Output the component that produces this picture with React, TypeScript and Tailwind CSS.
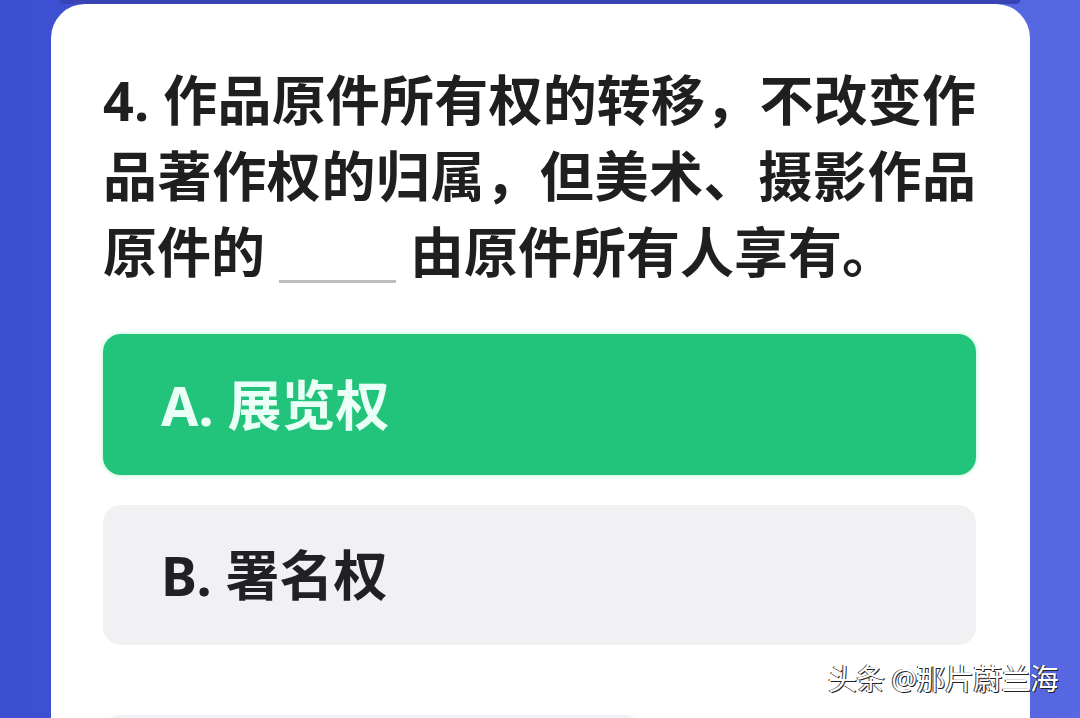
import React from "react";

const CJK = "font-['Noto_Sans','Noto_Sans_CJK_SC',sans-serif]";

function Option({ label, text, active }: { label: string; text: string; active?: boolean }) {
  return (
    <div
      className={
        active
          ? "h-[141px] rounded-[18px] bg-[#21c47a] shadow-[0_0_5px_#aef3d1] flex items-center pl-[58px]"
          : "h-[140px] rounded-[18px] bg-[#f1f1f3] flex items-center pl-[58px]"
      }
    >
      <span
        className={
          "text-[54px] font-bold leading-none " +
          (active ? "text-[#eafff5]" : "text-[#202124]")
        }
      >
        {label}. {text}
      </span>
    </div>
  );
}

export default function App() {
  return (
    <div className={`relative w-[1080px] h-[718px] overflow-hidden bg-gradient-to-r from-[#3d4fd1] via-[#4858d8] to-[#5768e2] ${CJK}`}>
      {/* strip left over from the card above */}
      <div className="h-[4px] mx-[60px] bg-[#3843b4] rounded-b-[10px]" />

      {/* Question card */}
      <div className="ml-[51px] w-[979px] h-[760px] bg-white rounded-t-[34px] pt-[58px] pl-[52px] pr-[54px]">
        <div className="text-[54px] font-bold leading-[76px] text-[#1f1f1f]">
          <div className="text-justify [text-align-last:justify]">4. 作品原件所有权的转移，不改变作</div>
          <div className="text-justify [text-align-last:justify]">品著作权的归属，但美术、摄影作品</div>
          <div>
            原件的
            <span className="inline-block align-baseline w-[117px] h-[3px] bg-[#bdbdbd] mx-[14px] translate-y-[10px]" />
            由原件所有人享有。
          </div>
        </div>

        <div className="mt-[44px] flex flex-col gap-[30px]">
          <Option label="A" text="展览权" active />
          <Option label="B" text="署名权" />
        </div>
        <div className="mt-[70px] w-[540px] h-[140px] rounded-[18px] bg-[#f1f1f3]" />
      </div>

      {/* watermark */}
      <div className="absolute right-[22px] top-[664px] text-[29px] text-white leading-none tracking-tight [text-shadow:1px_1px_0_#222,-1px_0_0_#333]">
        头条 @那片蔚兰海
      </div>
    </div>
  );
}
